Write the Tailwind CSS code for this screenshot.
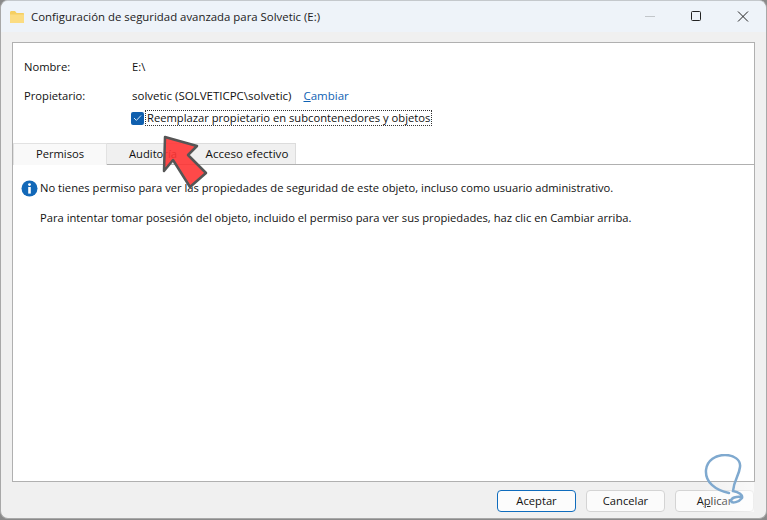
<!DOCTYPE html>
<html lang="es">

<head>
    <meta charset="UTF-8">
    <title>Configuración de seguridad avanzada para Solvetic (E:)</title>
    <script src="https://cdn.jsdelivr.net/npm/@tailwindcss/browser@4"></script>
</head>

<body class="bg-[#8a8a8a] w-[767px] h-[520px] overflow-hidden font-['Open_Sans',sans-serif] text-[11.2px] text-[#111]">
    <div class="relative w-[767px] h-[519px] bg-[#f0f0f0] rounded-t-[8px] rounded-b-[8px] border border-[#a8a8a8] border-t-[#c4c8cc] flex flex-col overflow-hidden">
        <!-- title bar -->
        <div class="h-[31px] shrink-0 bg-[#eef3f9] flex items-center">
            <svg class="ml-[8px] mr-[6px]" width="16" height="14" viewBox="0 0 16 14">
                <path d="M1 2.5C1 1.7 1.6 1 2.4 1H6l1.6 2H14c.6 0 1 .4 1 1v8c0 .6-.4 1-1 1H2c-.6 0-1-.4-1-1z" fill="#f5cf62" />
                <path d="M1 4.5h14V12c0 .6-.4 1-1 1H2c-.6 0-1-.4-1-1z" fill="#fbdc82" />
            </svg>
            <span class="text-[11.4px] text-[#222]">Configuración de seguridad avanzada para Solvetic (E:)</span>
            <div class="ml-auto flex items-center">
                <svg width="46" height="31" viewBox="0 0 46 31"><path d="M18 15.5h10" stroke="#c2c6ca" stroke-width="1" /></svg>
                <svg width="46" height="31" viewBox="0 0 46 31"><rect x="18.5" y="10.5" width="9" height="9" rx="1" fill="none" stroke="#222" stroke-width="1" /></svg>
                <svg class="ml-[1px]" width="46" height="31" viewBox="0 0 46 31"><path d="M18 10.5l10 10M28 10.5l-10 10" stroke="#222" stroke-width="1" /></svg>
            </div>
        </div>

        <!-- main panel -->
        <div class="mx-[11px] mt-[10px] h-[440px] bg-white border border-[#b0b0b0] flex flex-col">
            <div class="pl-[11px] pt-[14px]">
                <div class="flex h-[20px] items-center">
                    <span class="w-[108px]">Nombre:</span>
                    <span>E:\</span>
                </div>
                <div class="flex h-[20px] items-center mt-[9px]">
                    <span class="w-[108px]">Propietario:</span>
                    <span class="text-[11.5px]">solvetic (SOLVETICPC\solvetic)</span>
                    <a class="ml-[12px] text-[11.5px] text-[#0f62b4]"><span class="underline">C</span>ambiar</a>
                </div>
                <div class="flex items-center ml-[107px] mt-[3px] h-[18px]">
                    <span class="w-[13px] h-[13px] rounded-[2px] bg-[#0f5fae] flex items-center justify-center">
                        <svg width="9" height="8" viewBox="0 0 9 8"><path d="M1 4l2.4 2.4L8 1.5" fill="none" stroke="#d8e8f7" stroke-width="1" /></svg>
                    </span>
                    <span class="ml-[1px] px-[1px] border border-dotted border-[#333] leading-[14px]">Reemplazar propietario en subcontenedores y objetos</span>
                </div>
            </div>

            <!-- tabs -->
            <div class="flex mt-[16px] h-[22px] border-b border-[#b0b0b0] shrink-0">
                <div class="w-[94px] h-[22px] bg-[#f9f9f9] border-t border-l border-r border-[#e2e2e2] flex items-center justify-center">Permisos</div>
                <div class="w-[92px] h-[21px] bg-[#f0f0f0] border-t border-[#dcdcdc] flex items-center justify-center">Auditoría</div>
                <div class="w-[97px] h-[21px] bg-[#f0f0f0] border-t border-r border-[#dcdcdc] flex items-center justify-center text-[11.6px]">Acceso efectivo</div>
            </div>

            <!-- message -->
            <div class="pl-[8px] pt-[14px]">
                <div class="flex items-center h-[18px]">
                    <svg width="17" height="17" viewBox="0 0 17 17">
                        <circle cx="8.5" cy="8.5" r="8" fill="#1268b8" />
                        <circle cx="8.5" cy="4.6" r="1.4" fill="#fff" />
                        <rect x="7.2" y="7" width="2.6" height="6.6" fill="#fff" />
                    </svg>
                    <span class="ml-[2px]">No tienes permiso para ver las propiedades de seguridad de este objeto, incluso como usuario administrativo.</span>
                </div>
                <p class="ml-[19px] mt-[13px]">Para intentar tomar posesión del objeto, incluido el permiso para ver sus propiedades, haz clic en Cambiar arriba.</p>
            </div>
        </div>

        <!-- buttons -->
        <div class="flex justify-end gap-[10px] mt-[8px] pr-[12px]">
            <button class="w-[79px] h-[22px] bg-[#fcfcfc] border border-[#0f6cbd] rounded-[4px]">Aceptar</button>
            <button class="w-[79px] h-[22px] bg-[#fbfbfb] border border-[#d4d4d4] rounded-[4px]">Cancelar</button>
            <button class="w-[79px] h-[22px] bg-[#fbfbfb] border border-[#d4d4d4] rounded-[4px]">A<span class="underline">p</span>licar</button>
        </div>

        <!-- red arrow overlay -->
        <svg class="absolute left-[155px] top-[132px]" width="56" height="60" viewBox="0 0 56 60">
            <path d="M9 4L41 13 32 22 50 40 34 54 17 27 8 38Z" fill="#ff3535" fill-opacity="0.9" stroke="#555" stroke-width="2.5" stroke-linejoin="round" />
        </svg>

        <!-- watermark -->
        <div class="absolute left-[696px] top-[481px] w-[57px] h-[30px] bg-linear-to-r from-white/0 via-white/30 to-white/60"></div>
        <svg class="absolute left-[700px] top-[453px]" width="64" height="60" viewBox="0 0 64 60">
            <path d="M28 39C14 36 4 28 5 16 6 6 15 1 24 1 33 1 40 6 39 13 38 22 33 26 32 37 38 38 42 41 41 44 38 48 31 50 30 47 30 44 35 42 41 43" fill="none" stroke="#7fa9cf" stroke-width="2.5" stroke-linecap="round" />
        </svg>
    </div>
</body>

</html>
